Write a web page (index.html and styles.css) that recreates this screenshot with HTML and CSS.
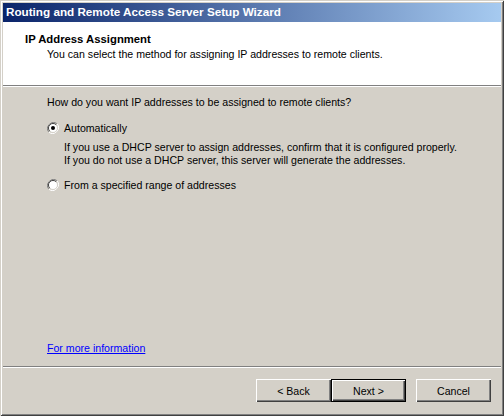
FILE: index.html
```html
<!DOCTYPE html>
<html lang="en">
<head>
    <meta charset="UTF-8">
    <title>Routing and Remote Access Server Setup Wizard</title>
    <link rel="stylesheet" href="styles.css">
</head>
<body>
    <div class="window">
        <div class="titlebar">Routing and Remote Access Server Setup Wizard</div>

        <div class="header">
            <div class="header-title">IP Address Assignment</div>
            <div class="header-sub">You can select the method for assigning IP addresses to remote clients.</div>
        </div>
        <div class="etched"></div>

        <div class="content">
            <p class="question">How do you want IP addresses to be assigned to remote clients?</p>

            <label class="radio">
                <svg width="12" height="12" viewBox="0 0 12 12">
                    <path d="M10.2 1.8A6 6 0 0 0 1.8 10.2" fill="none" stroke="#808080" stroke-width="1"/>
                    <path d="M1.8 10.2A6 6 0 0 0 10.2 1.8" fill="none" stroke="#ffffff" stroke-width="1"/>
                    <circle cx="6" cy="6" r="4.5" fill="#ffffff"/>
                    <path d="M9.2 2.8A4.5 4.5 0 0 0 2.8 9.2" fill="none" stroke="#404040" stroke-width="1"/>
                    <path d="M2.8 9.2A4.5 4.5 0 0 0 9.2 2.8" fill="none" stroke="#d4d0c8" stroke-width="1"/>
                    <circle cx="6" cy="6" r="2" fill="#000000"/>
                </svg>
                <span>Automatically</span>
            </label>
            <p class="detail">If you use a DHCP server to assign addresses, confirm that it is configured properly.<br>If you do not use a DHCP server, this server will generate the addresses.</p>

            <label class="radio">
                <svg width="12" height="12" viewBox="0 0 12 12">
                    <path d="M10.2 1.8A6 6 0 0 0 1.8 10.2" fill="none" stroke="#808080" stroke-width="1"/>
                    <path d="M1.8 10.2A6 6 0 0 0 10.2 1.8" fill="none" stroke="#ffffff" stroke-width="1"/>
                    <circle cx="6" cy="6" r="4.5" fill="#ffffff"/>
                    <path d="M9.2 2.8A4.5 4.5 0 0 0 2.8 9.2" fill="none" stroke="#404040" stroke-width="1"/>
                    <path d="M2.8 9.2A4.5 4.5 0 0 0 9.2 2.8" fill="none" stroke="#d4d0c8" stroke-width="1"/>
                </svg>
                <span>From a specified range of addresses</span>
            </label>

            <a class="more" href="#">For more information</a>
        </div>
        <div class="etched"></div>

        <div class="footer">
            <button class="btn">&lt; Back</button>
            <button class="btn default">Next &gt;</button>
            <button class="btn cancel">Cancel</button>
        </div>
    </div>
</body>
</html>
```

FILE: styles.css
```css
html, body {
    margin: 0;
    padding: 0;
}
body {
    font-family: "Liberation Sans", Arial, sans-serif;
    font-size: 10.6px;
    color: #000;
    background: #d4d0c8;
}
.window {
    width: 504px;
    height: 416px;
    box-sizing: border-box;
    padding: 3px;
    background: #d4d0c8;
    box-shadow: inset 1px 1px 0 #d4d0c8, inset -1px -1px 0 #404040,
                inset 2px 2px 0 #ffffff, inset -2px -2px 0 #808080;
    display: flex;
    flex-direction: column;
}
.titlebar {
    height: 19px;
    line-height: 18px;
    padding-left: 3px;
    color: #fff;
    font-weight: bold;
    font-size: 11.7px;
    background: linear-gradient(to right, #0a246a, #a6caf0);
    white-space: nowrap;
}
.header {
    height: 63px;
    background: #fff;
    padding: 10px 0 0 22px;
    box-sizing: border-box;
}
.header-title {
    font-weight: bold;
    font-size: 11.3px;
    line-height: 14px;
}
.header-sub {
    padding-left: 22px;
    line-height: 14px;
    margin-top: 1px;
}
.etched {
    height: 1px;
    border-top: 1px solid #808080;
    background: #fff;
}
.content {
    flex: 1;
    padding: 9px 0 0 44px;
    display: flex;
    flex-direction: column;
}
.question {
    margin: 0 0 12px;
    line-height: 13px;
}
.radio {
    display: flex;
    align-items: center;
    gap: 5px;
    height: 13px;
}
.detail {
    margin: 7px 0 11px 17px;
    line-height: 13px;
}
.more {
    margin-top: auto;
    margin-bottom: 12px;
    color: #0000ff;
    text-decoration: underline;
    align-self: flex-start;
}
.footer {
    height: 45px;
    display: flex;
    align-items: center;
    padding-left: 253px;
}
.btn {
    width: 75px;
    height: 23px;
    padding: 0;
    font-family: inherit;
    font-size: 10.6px;
    color: #000;
    background: #d4d0c8;
    border: none;
    box-shadow: inset 1px 1px 0 #fff, inset -1px -1px 0 #404040,
                inset -2px -2px 0 #808080;
}
.btn.default {
    box-shadow: inset 0 0 0 1px #000, inset 2px 2px 0 #fff,
                inset -2px -2px 0 #404040, inset -3px -3px 0 #808080;
}
.btn.cancel {
    margin-left: 10px;
}
```
